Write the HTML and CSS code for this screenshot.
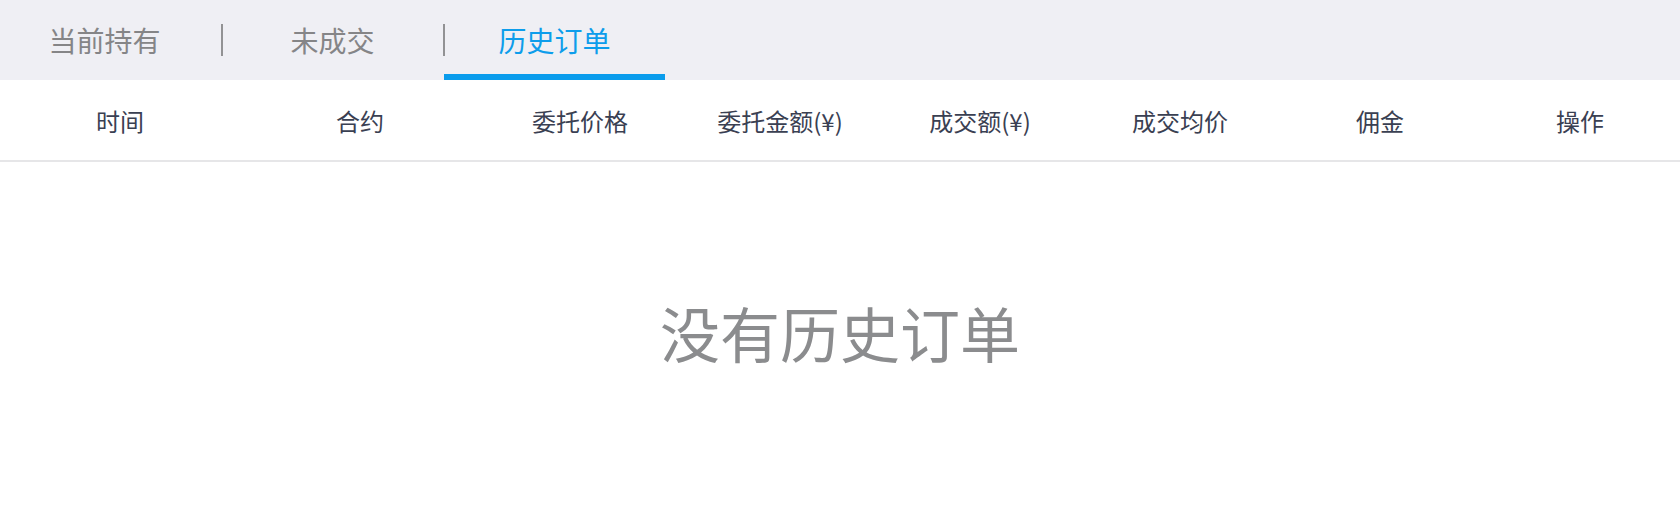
FILE: index.html
```html
<!DOCTYPE html>
<html lang="zh-CN">
<head>
<meta charset="utf-8">
<title>历史订单</title>
<link rel="stylesheet" href="styles.css">
</head>
<body>
<div class="page">
  <nav class="tabs">
    <div class="tab tab-first">当前持有</div>
    <div class="sep"></div>
    <div class="tab">未成交</div>
    <div class="sep"></div>
    <div class="tab tab-active">历史订单</div>
  </nav>
  <div class="thead">
    <div class="th th-wide">时间</div>
    <div class="th th-wide">合约</div>
    <div class="th">委托价格</div>
    <div class="th">委托金额(¥)</div>
    <div class="th">成交额(¥)</div>
    <div class="th">成交均价</div>
    <div class="th">佣金</div>
    <div class="th">操作</div>
  </div>
  <div class="empty">没有历史订单</div>
</div>
</body>
</html>
```
FILE: styles.css
```css
html, body {
  margin: 0;
  padding: 0;
  background: #ffffff;
}
body {
  font-family: "Noto Sans CJK SC", "Noto Sans", sans-serif;
}
.page {
  width: 1680px;
  height: 506px;
  display: flex;
  flex-direction: column;
  overflow: hidden;
}
.tabs {
  height: 80px;
  background: #efeff4;
  display: flex;
  align-items: stretch;
  flex-shrink: 0;
}
.tab {
  width: 221px;
  box-sizing: border-box;
  display: flex;
  align-items: center;
  justify-content: center;
  font-size: 28px;
  color: #858587;
  padding-bottom: 1px;
}
.tab-first {
  padding-right: 12px;
}
.tab-active {
  color: #0d9deb;
  box-shadow: inset 0 -6px 0 #0a9cec;
}
.sep {
  width: 2px;
  height: 32px;
  margin: 24px -1px 0 0;
  background: #929294;
}
.thead {
  height: 80px;
  display: flex;
  border-bottom: 2px solid #e6e6e8;
  flex-shrink: 0;
}
.th {
  width: 200px;
  display: flex;
  align-items: center;
  justify-content: center;
  font-size: 24px;
  color: #3a4052;
}
.th-wide {
  width: 240px;
}
.empty {
  flex: 1;
  display: flex;
  align-items: center;
  justify-content: center;
  font-size: 60px;
  color: #8b8c8e;
  padding-bottom: 6px;
}
```
